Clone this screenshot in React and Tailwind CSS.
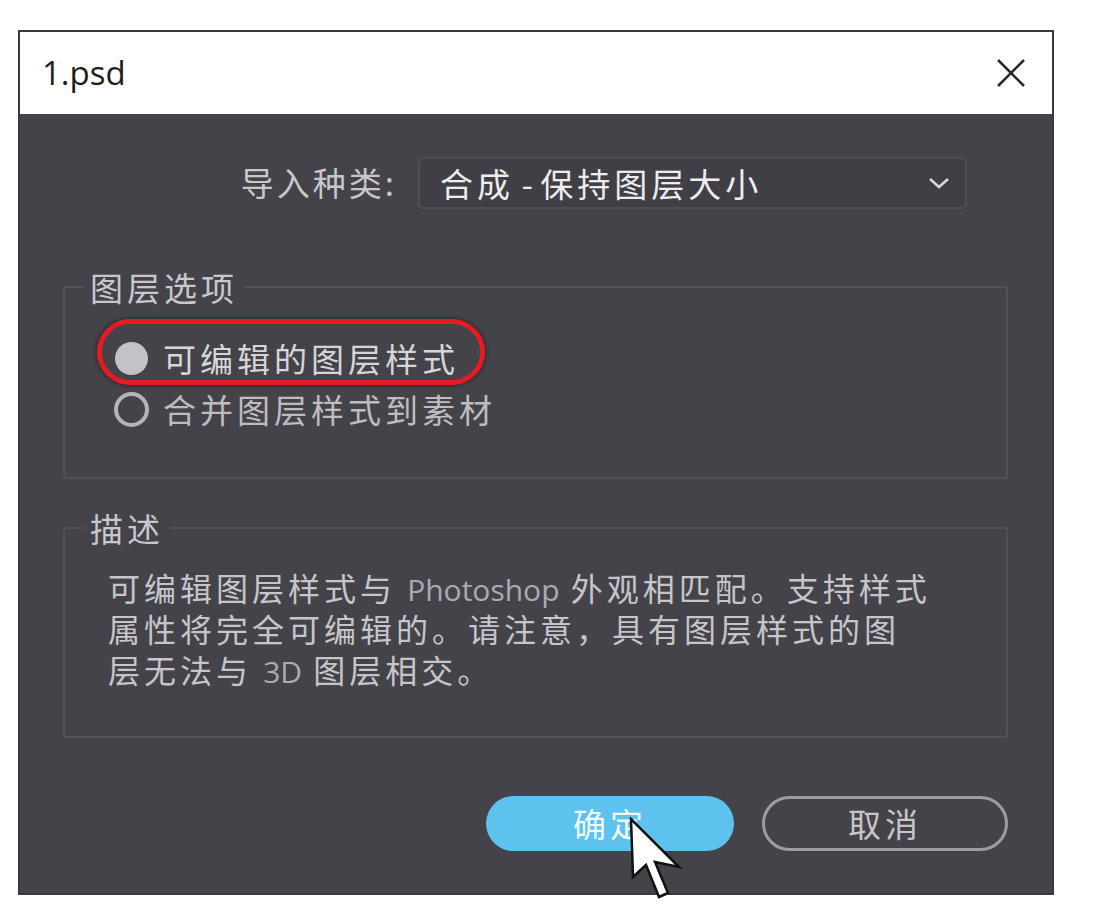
import React from 'react';

const cjk = { fontFamily: '"Noto Sans CJK SC", "Noto Sans", sans-serif' };
const latin = { fontFamily: '"Open Sans", sans-serif' };

function Radio({ checked }) {
  if (checked) {
    return <span className="block w-[33px] h-[33px] rounded-full bg-[#c3c3c7] shrink-0" />;
  }
  return <span className="block w-[35px] h-[35px] rounded-full border-[4px] border-[#b4b4b8] shrink-0" />;
}

function Cursor() {
  return (
    <svg className="absolute left-[629px] top-[817px]" width="56" height="96" viewBox="0 0 56 96">
      <path d="M2 2 L4 60 L17 48 L30 80 L39 76 L26 45 L50 50 Z" fill="#fff" stroke="#111" strokeWidth="2.5" strokeLinejoin="miter" />
    </svg>
  );
}

export default function App() {
  return (
    <div className="relative w-[1100px] h-[913px] bg-white pt-[30px] pl-[18px] overflow-hidden" style={cjk}>
      <div className="w-[1036px] h-[865px] border-2 border-[#3a393f] flex flex-col">
        {/* title bar */}
        <div className="h-[82px] bg-white flex items-center justify-between pl-[22px] pr-[26px] shrink-0">
          <span className="text-[33px] text-[#1e1e22]" style={latin}>1.psd</span>
          <svg width="30" height="30" viewBox="0 0 30 30">
            <path d="M2 2 L28 28 M28 2 L2 28" stroke="#2a2a2e" strokeWidth="2.6" />
          </svg>
        </div>

        <div className="flex-1 bg-[#444349] pt-[43px] tracking-[4px]">
          {/* import kind */}
          <div className="flex items-center">
            <div className="w-[385px] text-right text-[33px] text-[#c8c8cc] tracking-[3px] pr-[8px]">导入种类:</div>
            <div className="ml-[13px] w-[549px] h-[52px] rounded-[5px] border-2 border-[#4f4e55] bg-[#403f45] flex items-center justify-between pl-[20px] pr-[14px]">
              <span className="text-[33px] text-[#ededf0] leading-none">合成<span className="tracking-normal"> - </span>保持图层大小</span>
              <svg width="24" height="14" viewBox="0 0 24 14">
                <path d="M3 3 L12 11 L21 3" fill="none" stroke="#d8d8dc" strokeWidth="2.6" />
              </svg>
            </div>
          </div>

          {/* layer options */}
          <fieldset className="relative ml-[43px] mt-[58px] w-[945px] h-[212px] border-2 border-[#52515a] rounded-[3px]">
            <legend className="ml-[19px] px-[6px] text-[33px] leading-[40px] text-[#c8c8cc]">图层选项</legend>
            <div className="pt-[26px] pl-[50px]">
              <div className="flex items-center h-[51px] gap-[15px]">
                <Radio checked />
                <span className="text-[33px] text-[#d6d6d9]">可编辑的图层样式</span>
              </div>
              <div className="flex items-center h-[51px] gap-[14px] -ml-[1px]">
                <Radio />
                <span className="text-[33px] text-[#bdbdc1]">合并图层样式到素材</span>
              </div>
            </div>
            <div className="absolute left-[32px] top-[12px] w-[388px] h-[66px] rounded-full border-[5px] border-[#e31b23] shadow-[0_0_4px_rgba(0,0,0,0.6)]" />
          </fieldset>

          {/* description */}
          <fieldset className="ml-[43px] mt-[29px] w-[945px] h-[230px] border-2 border-[#52515a] rounded-[3px]">
            <legend className="ml-[19px] px-[6px] text-[33px] leading-[40px] text-[#c8c8cc]">描述</legend>
            <p className="pt-[19px] pl-[43px] text-[32px] leading-[41px] text-[#c6c6ca]">
              可编辑图层样式与 <span className="tracking-normal text-[30px] leading-none text-[#a9abb2]" style={latin}>Photoshop</span> 外观相匹配。支持样式<br />
              属性将完全可编辑的。请注意，具有图层样式的图<br />
              层无法与 <span className="tracking-normal text-[30px] leading-none text-[#a9abb2]" style={latin}>3D</span> 图层相交。
            </p>
          </fieldset>

          {/* buttons */}
          <div className="mt-[58px] flex justify-end gap-[28px] pr-[44px]">
            <button className="w-[248px] h-[55px] rounded-full bg-[#5ec2ee] text-[33px] text-[#eef8fd] tracking-[4px]">确定</button>
            <button className="w-[246px] h-[55px] rounded-full border-[3px] border-[#9c9ca1] text-[33px] text-[#c6c6ca] tracking-[4px]">取消</button>
          </div>
        </div>
      </div>
      <Cursor />
    </div>
  );
}
